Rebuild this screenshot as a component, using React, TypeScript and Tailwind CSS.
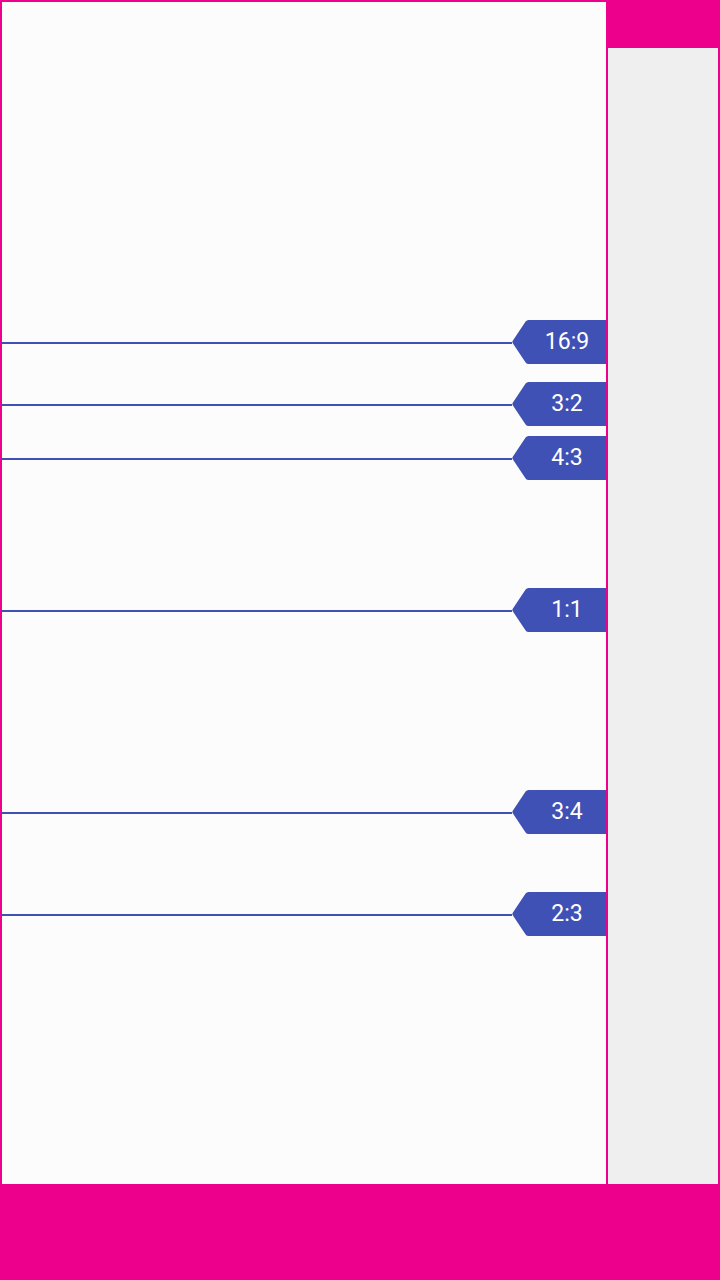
const guides = [
  { label: '16:9', top: 'top-[318px]' },
  { label: '3:2', top: 'top-[380px]' },
  { label: '4:3', top: 'top-[434px]' },
  { label: '1:1', top: 'top-[586px]' },
  { label: '3:4', top: 'top-[788px]' },
  { label: '2:3', top: 'top-[890px]' },
]

function Tag({ label }: { label: string }) {
  return (
    <div className="relative w-[94px] h-[44px] shrink-0">
      <svg className="absolute inset-0" width="94" height="44" viewBox="0 0 94 44">
        <path
          d="M0.6 22.9 Q0 22 0.6 21.1 L13.6 1.6 Q14.7 0 16.6 0 H94 V44 H16.6 Q14.7 44 13.6 42.4 Z"
          fill="#3f51b5"
        />
      </svg>
      <span className="absolute inset-y-0 left-[16px] right-0 flex items-center justify-center text-[23px] text-white font-['Roboto',sans-serif]">
        {label}
      </span>
    </div>
  )
}

export default function App() {
  return (
    <div className="w-[720px] h-[1280px] bg-[#ec008c] flex flex-col">
      <div className="flex flex-1">
        <div className="relative mt-[2px] ml-[2px] w-[604px] bg-[#fcfcfc]">
          {guides.map((g) => (
            <div key={g.label} className={`absolute left-0 right-0 ${g.top} h-[44px] flex items-center`}>
              <div className="flex-1 h-[2px] mt-[2px] bg-[#3f51b5]" />
              <Tag label={g.label} />
            </div>
          ))}
        </div>
        <div className="mt-[48px] ml-[2px] mr-[2px] flex-1 bg-[#efefef]" />
      </div>
      <div className="h-[96px] shrink-0" />
    </div>
  )
}
